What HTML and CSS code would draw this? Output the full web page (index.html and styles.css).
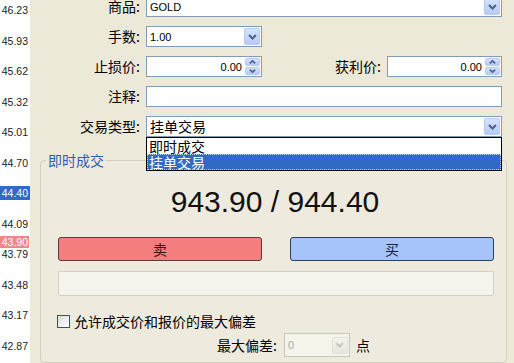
FILE: index.html
```html
<!DOCTYPE html>
<html>
<head>
<meta charset="utf-8">
<link rel="stylesheet" href="styles.css">
</head>
<body>
<div class="axis">
  <div class="ticks">
    <div class="tick">46.23</div>
    <div class="tick">45.93</div>
    <div class="tick">45.62</div>
    <div class="tick">45.32</div>
    <div class="tick">45.01</div>
    <div class="tick">44.70</div>
    <div class="tick"><span class="hl">44.40</span></div>
    <div class="tick">44.09</div>
    <div class="tick">43.79</div>
    <div class="tick">43.48</div>
    <div class="tick">43.17</div>
    <div class="tick">42.87</div>
  </div>
  <div class="marker">43.90</div>
</div>
<div class="dialog">
  <div class="form">
    <div class="row">
      <label class="lbl">商品:</label>
      <div class="field wide"><span class="val">GOLD</span><span class="arrow"><svg width="9" height="6" viewBox="0 0 9 6"><path d="M1 1 L4.5 4.5 L8 1" fill="none" stroke="#4D6185" stroke-width="2"/></svg></span></div>
    </div>
    <div class="row">
      <label class="lbl">手数:</label>
      <div class="field narrow"><span class="val">1.00</span><span class="arrow"><svg width="9" height="6" viewBox="0 0 9 6"><path d="M1 1 L4.5 4.5 L8 1" fill="none" stroke="#4D6185" stroke-width="2"/></svg></span></div>
    </div>
    <div class="row">
      <label class="lbl">止损价:</label>
      <div class="field narrow"><span class="val right">0.00</span><span class="spin"><span class="sbtn"><svg width="7" height="4" viewBox="0 0 7 4"><path d="M0.8 3.4 L3.5 0.8 L6.2 3.4" fill="none" stroke="#4D6185" stroke-width="1.6"/></svg></span><span class="sbtn"><svg width="7" height="4" viewBox="0 0 7 4"><path d="M0.8 0.6 L3.5 3.2 L6.2 0.6" fill="none" stroke="#4D6185" stroke-width="1.6"/></svg></span></span></div>
      <label class="lbl2">获利价:</label>
      <div class="field narrow2"><span class="val right">0.00</span><span class="spin"><span class="sbtn"><svg width="7" height="4" viewBox="0 0 7 4"><path d="M0.8 3.4 L3.5 0.8 L6.2 3.4" fill="none" stroke="#4D6185" stroke-width="1.6"/></svg></span><span class="sbtn"><svg width="7" height="4" viewBox="0 0 7 4"><path d="M0.8 0.6 L3.5 3.2 L6.2 0.6" fill="none" stroke="#4D6185" stroke-width="1.6"/></svg></span></span></div>
    </div>
    <div class="row">
      <label class="lbl">注释:</label>
      <div class="field wide"></div>
    </div>
    <div class="row">
      <label class="lbl">交易类型:</label>
      <div class="field wide combo-open"><span class="val cjk">挂单交易</span><span class="arrow"><svg width="9" height="6" viewBox="0 0 9 6"><path d="M1 1 L4.5 4.5 L8 1" fill="none" stroke="#4D6185" stroke-width="2"/></svg></span>
        <div class="list">
          <div class="item">即时成交</div>
          <div class="item sel">挂单交易</div>
        </div>
      </div>
    </div>
  </div>

  <fieldset class="group">
    <legend class="legend">即时成交</legend>
    <div class="price">943.90 / 944.40</div>
    <div class="btns">
      <div class="btn sell">卖</div>
      <div class="btn buy">买</div>
    </div>
    <div class="bar"></div>
    <div class="check-row"><span class="checkbox"></span><span class="check-text">允许成交价和报价的最大偏差</span></div>
    <div class="dev-row">
      <span class="dev-lbl">最大偏差:</span>
      <div class="field dis"><span class="val">0</span><span class="arrow dis-arrow"><svg width="9" height="6" viewBox="0 0 9 6"><path d="M1 1 L4.5 4.5 L8 1" fill="none" stroke="#C8C8C0" stroke-width="2"/></svg></span></div>
      <span class="unit">点</span>
    </div>
  </fieldset>
</div>
</body>
</html>
```

FILE: styles.css
```css
html, body {
  margin: 0;
  padding: 0;
}
body {
  width: 514px;
  height: 363px;
  overflow: hidden;
  display: flex;
  background: #ECE9D8;
  font-family: "Liberation Sans", "Noto Sans CJK SC", sans-serif;
  color: #000;
}

/* price axis */
.axis {
  width: 30px;
  flex: none;
  background: #fff;
  position: relative;
  overflow: hidden;
}
.ticks {
  margin-top: -5px;
}
.tick {
  height: 30.5px;
  line-height: 30.5px;
  font-size: 10.5px;
  text-align: right;
  padding-right: 2px;
  color: #222;
}
.hl {
  display: inline-block;
  line-height: 14px;
  width: 30px;
  margin-right: -2px;
  padding-right: 2px;
  box-sizing: border-box;
  background: #316AC5;
  color: #fff;
}
.marker {
  position: absolute;
  left: 0;
  top: 236px;
  width: 29px;
  height: 12px;
  line-height: 12px;
  font-size: 10.5px;
  text-align: right;
  padding-right: 1px;
  box-sizing: border-box;
  background: #EC8A8A;
  color: #fff;
}

/* dialog */
.dialog {
  flex: 1;
  display: flex;
  flex-direction: column;
}
.form {
  margin-top: -4px;
  display: flex;
  flex-direction: column;
  gap: 9px;
}
.row {
  display: flex;
  align-items: center;
  height: 21px;
}
.lbl {
  width: 110px;
  flex: none;
  text-align: right;
  margin-right: 6px;
  font-family: "Noto Sans CJK SC", sans-serif;
  font-size: 14px;
  line-height: 21px;
}
.lbl2 {
  width: 119px;
  flex: none;
  text-align: right;
  margin-right: 6px;
  font-family: "Noto Sans CJK SC", sans-serif;
  font-size: 14px;
  line-height: 21px;
}
.field {
  height: 21px;
  box-sizing: border-box;
  border: 1px solid #7F9DB9;
  background: #fff;
  display: flex;
  align-items: center;
  font-size: 11px;
  position: relative;
}
.wide { width: 356px; }
.narrow { width: 116px; }
.narrow2 { width: 115px; }
.val {
  flex: 1;
  padding-left: 3px;
  white-space: nowrap;
}
.val.right {
  text-align: right;
  padding-right: 3px;
}
.val.cjk {
  font-family: "Noto Sans CJK SC", sans-serif;
  font-size: 14px;
  line-height: 19px;
}
.arrow {
  width: 16px;
  height: 17px;
  margin-right: 1px;
  box-sizing: border-box;
  border: 1px solid #B7CAF3;
  border-radius: 2px;
  background: linear-gradient(#D6E2FD, #B5CBF7);
  display: flex;
  align-items: center;
  justify-content: center;
}
.spin {
  width: 15px;
  height: 17px;
  margin-right: 1px;
  display: flex;
  flex-direction: column;
  gap: 1px;
}
.sbtn {
  flex: 1;
  border: 1px solid #B7CAF3;
  border-radius: 2px;
  background: linear-gradient(#D6E2FD, #B5CBF7);
  display: flex;
  align-items: center;
  justify-content: center;
}

/* open dropdown */
.list {
  position: absolute;
  left: -1px;
  top: 20px;
  width: 356px;
  height: 34px;
  box-sizing: border-box;
  border: 1px solid #000;
  background: #fff;
  z-index: 5;
  font-family: "Noto Sans CJK SC", sans-serif;
  font-size: 14px;
}
.item {
  height: 16px;
  line-height: 16px;
  padding-left: 2px;
}
.item.sel {
  background: #316AC5;
  color: #fff;
  outline: 1px dotted #C9D6EE;
  outline-offset: -1px;
}

/* group box */
.group {
  margin: 15px 7px 0 10px;
  padding: 0 12px 0 17px;
  border: 1px solid #D0D0BF;
  border-radius: 4px;
  min-width: 0;
  flex: 1;
  background: #EEEBDE;
}
.legend {
  margin-left: -12px;
  padding: 0 2px;
  font-family: "Noto Sans CJK SC", sans-serif;
  font-size: 14px;
  line-height: 16px;
  color: #2E5DB0;
}
.price {
  margin-top: 16px;
  height: 36px;
  line-height: 36px;
  text-align: center;
  font-size: 30px;
  color: #111;
  padding-right: 2px;
}
.btns {
  display: flex;
  gap: 28px;
  margin-top: 17px;
}
.btn {
  flex: 1;
  height: 24px;
  box-sizing: border-box;
  border-radius: 3px;
  font-family: "Noto Sans CJK SC", sans-serif;
  font-size: 14px;
  line-height: 22px;
  text-align: center;
}
.sell {
  background: #F47E7E;
  border: 1px solid #5A3A3A;
  color: #3A1010;
}
.buy {
  background: #A6C3FA;
  border: 1px solid #2E3E5E;
  color: #10203A;
}
.bar {
  margin-top: 10px;
  height: 25px;
  box-sizing: border-box;
  border: 1px solid #D3D1C4;
  border-radius: 2px;
  background: #F4F3EC;
}
.check-row {
  display: flex;
  align-items: center;
  margin-top: 18px;
  margin-left: -1px;
  height: 14px;
}
.checkbox {
  width: 13px;
  height: 13px;
  box-sizing: border-box;
  border: 1px solid #3C4F6A;
  background: linear-gradient(135deg, #DCDCD6, #FFFFFF);
  margin-right: 4px;
}
.check-text {
  font-family: "Noto Sans CJK SC", sans-serif;
  font-size: 14px;
  line-height: 14px;
}
.dev-row {
  display: flex;
  align-items: center;
  margin-top: 5px;
  padding-left: 159px;
  height: 24px;
}
.dev-lbl {
  font-family: "Noto Sans CJK SC", sans-serif;
  font-size: 14px;
  margin-right: 7px;
}
.field.dis {
  width: 66px;
  height: 24px;
  border-color: #C9C7BA;
  background: #F5F4EA;
  color: #A8A8A0;
}
.dis-arrow {
  border-color: #E2E0D6;
  background: linear-gradient(#F4F3EE, #E8E6DC);
}
.unit {
  margin-left: 6px;
  font-family: "Noto Sans CJK SC", sans-serif;
  font-size: 14px;
}
```
